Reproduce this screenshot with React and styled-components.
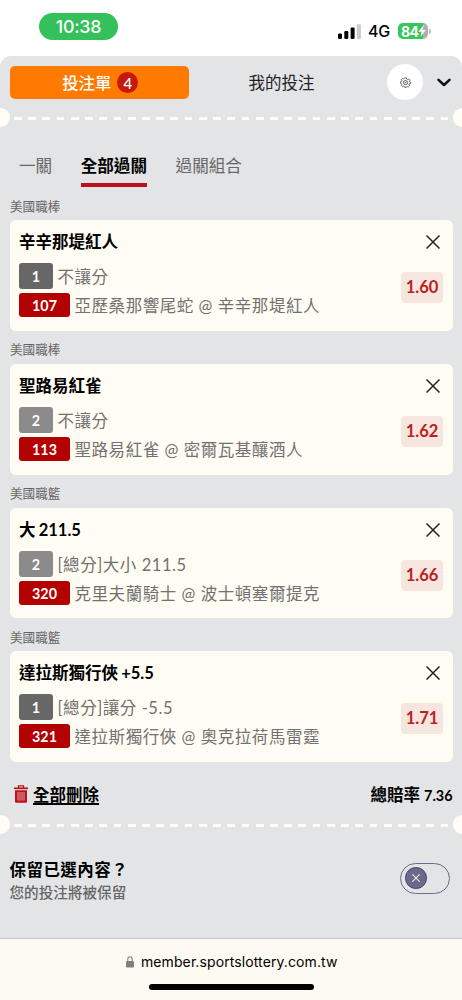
import React, {useState} from "react";
import styled, {createGlobalStyle} from "styled-components";

const GlobalStyle = createGlobalStyle`
  * {
    box-sizing: border-box;
  }

  body {
    margin: 0;
    background: #fff;
    font-family: Lato, "Noto Sans CJK TC", sans-serif;
    color: #000;
  }

  button {
    margin: 0;
    padding: 0;
    border: 0;
    background: none;
    font: inherit;
    color: inherit;
  }

  svg {
    display: block;
    flex: none;
  }
`

const Screen = styled.div`
  display: flex;
  flex-direction: column;
  width: 462px;
  height: 1000px;
  overflow: hidden;
`

// status bar
const StatusBar = styled.header`
  display: flex;
  justify-content: space-between;
  flex: none;
  height: 56px;
  padding: 13px 34px 0 39px;
  font-family: Inter, sans-serif;
`

const Clock = styled.div`
  width: 79px;
  height: 27px;
  border-radius: 14px;
  background: #34c05a;
  color: #fff;
  font-size: 17.8px;
  font-weight: 500;
  line-height: 28px;
  letter-spacing: -0.2px;
  text-align: center;
`

const StatusIcons = styled.div`
  display: flex;
  align-items: center;
  height: 16px;
  margin-top: 10px;
`

const Network = styled.span`
  margin: 0 8px 0 7px;
  font-size: 16px;
  font-weight: 500;
  line-height: 16px;
  letter-spacing: -0.3px;
  width: 22px;
  white-space: nowrap;
`

const Battery = styled.div`
  display: flex;
  align-items: center;
  width: 30px;
  height: 16px;
  padding-left: 3px;
  border-radius: 5px;
  background: linear-gradient(90deg, #34c759 84%, #b0b0b0 84%);
  color: #fff;
  font-size: 14px;
  font-weight: 700;
  letter-spacing: -0.6px;
`

const BatteryCap = styled.i`
  width: 2px;
  height: 5px;
  margin-left: 1px;
  margin-right: -3px;
  border-radius: 0 2px 2px 0;
  background: #bbb;
`

// bet slip
const Slip = styled.main`
  flex: 1;
  min-height: 0;
  overflow: hidden;
  border-radius: 11px 11px 0 0;
  background: #e3e4e6;
`

const SlipHeader = styled.div`
  display: flex;
  align-items: center;
  height: 52px;
  padding: 0 11px 0 9.5px;
`

const SlipButton = styled.button`
  display: flex;
  align-items: center;
  justify-content: center;
  gap: 6px;
  width: 179.5px;
  height: 33px;
  border-radius: 5px;
  background: #ff7a00;
  color: #fff;
  font-size: 16.4px;
  font-weight: 500;
`

const Count = styled.span`
  width: 21px;
  height: 21px;
  margin-right: -2px;
  border-radius: 50%;
  background: #c5190f;
  font-size: 15px;
  line-height: 22px;
  text-align: center;
`

const MyBets = styled.button`
  flex: 1;
  padding-right: 13px;
  color: #222;
  font-size: 16.5px;
  text-align: center;
`

const Settings = styled.button`
  display: flex;
  align-items: center;
  justify-content: center;
  width: 36px;
  height: 36px;
  margin-right: 14px;
  border-radius: 50%;
  background: #fff;
`

const TearLine = styled.div`
  display: flex;
  align-items: center;
  justify-content: space-between;
  height: 19px;
  margin: 0 -9px;
`

const Notch = styled.i`
  width: 18.5px;
  height: 19px;
  border-radius: 50%;
  background: #fffdf3;
`

const Dashes = styled.i`
  width: 434.5px;
  height: 3px;
  margin-top: 2px;
  background: repeating-linear-gradient(90deg, #fffdf3 0 7.8px, transparent 7.8px 14.22px);
`

const Tabs = styled.nav`
  display: flex;
  gap: 28.5px;
  height: 60px;
  padding: 22px 0 0 19px;
`

const Tab = styled.button`
  height: 38px;
  border-bottom: 4px solid ${({$active}) => $active ? '#ba101a' : 'transparent'};
  color: ${({$active}) => $active ? '#000' : '#666'};
  font-size: 16.6px;
  font-weight: ${({$active}) => $active ? 700 : 400};
  line-height: 35px;
`

const League = styled.div`
  height: 33.1px;
  padding: 8.5px 10px 0;
  color: #666;
  font-size: 12.6px;
  line-height: 22px;
`

const Card = styled.section`
  display: flex;
  justify-content: space-between;
  height: 110.7px;
  margin: 0 9.5px;
  padding: 10px 9.5px 0 9.5px;
  border-radius: 6px;
  background: #fffdf3;
`

const CardSide = styled.div`
  display: flex;
  flex-direction: column;
  align-items: flex-end;
`

const Pick = styled.h3`
  height: 24px;
  margin: 0 0 9px;
  font-size: 16.5px;
  font-weight: 700;
  line-height: 24px;
  word-spacing: -0.8px;
`

const Line = styled.div`
  display: flex;
  align-items: center;
  gap: ${({$gap}) => $gap}px;
  height: ${({$height}) => $height}px;
  margin-bottom: 4px;
  color: #717171;
  font-size: 16.5px;
  letter-spacing: 0.55px;
  white-space: nowrap;
`

const Tag = styled.span`
  width: ${({$width}) => $width}px;
  height: 100%;
  border-radius: 3px;
  background: ${({$color}) => $color};
  color: #fff;
  font-size: 14.3px;
  font-weight: 700;
  line-height: ${({$height}) => $height + 1}px;
  letter-spacing: 0;
  text-align: center;
`

const Close = styled.button`
  margin: 5px 3px 23px 0;
`

const Odds = styled.div`
  width: 42px;
  height: 31px;
  border-radius: 4px;
  background: #f7e5df;
  color: #b7241c;
  font-size: 16.5px;
  font-weight: 700;
  line-height: 31px;
  text-align: center;
`

const Summary = styled.div`
  display: flex;
  align-items: center;
  justify-content: space-between;
  height: 53px;
  padding: 10px 9.5px 0 14px;
  font-size: 16.5px;
  font-weight: 700;
`

const ClearAll = styled.button`
  display: flex;
  align-items: center;
  gap: 5px;

  span {
    text-decoration: underline;
    text-decoration-thickness: 1.5px;
    text-underline-offset: 2px;
    text-decoration-skip-ink: none;
  }
`

const Total = styled.span`
  margin-left: 4px;
  font-size: 14.4px;
`

const Keep = styled.div`
  display: flex;
  align-items: center;
  justify-content: space-between;
  padding: 24px 12px 0 9.5px;
`

const KeepTitle = styled.div`
  font-size: 16.5px;
  font-weight: 700;
  line-height: 24px;
  letter-spacing: 0.45px;
`

const KeepText = styled.div`
  color: #666;
  font-size: 14.6px;
  font-weight: 500;
  line-height: 22px;
`

const Switch = styled.button`
  display: flex;
  align-items: center;
  justify-content: ${({$on}) => $on ? 'flex-end' : 'flex-start'};
  width: 50px;
  height: 31px;
  margin-top: -6px;
  padding: 0 4px;
  border: 1px solid #6c698e;
  border-radius: 16px;
`

const Knob = styled.span`
  display: flex;
  align-items: center;
  justify-content: center;
  width: 21.5px;
  height: 21.5px;
  border: 1px solid #45416c;
  border-radius: 50%;
  background: #6b6988;
`

// browser bar
const BrowserBar = styled.footer`
  display: flex;
  flex-direction: column;
  align-items: center;
  flex: none;
  height: 62px;
  border-top: 1px solid #c5c5c7;
  background: #fcfaf1;
`

const Address = styled.div`
  display: flex;
  align-items: center;
  gap: 7px;
  height: 23px;
  margin: 11px 0 11px 1.5px;
  font-family: Inter, sans-serif;
  font-size: 14px;
  letter-spacing: 0.1px;
`

const HomeBar = styled.i`
  width: 165px;
  height: 6px;
  border-radius: 3px;
  background: #000;
`

const SignalIcon = () => (
    <svg width="23" height="15" viewBox="0 0 23 15">
        <rect x="0" y="9.5" width="4" height="5.5" rx="1.2"/>
        <rect x="6.3" y="7" width="4" height="8" rx="1.2"/>
        <rect x="12.6" y="3.5" width="4" height="11.5" rx="1.2"/>
        <rect x="18.9" y="0.3" width="4" height="14.7" rx="1.2" fill="#ccc"/>
    </svg>
)

const BoltIcon = () => (
    <svg width="8" height="12" viewBox="0 0 8 12">
        <path d="M5.6 0 0.3 6.8H3.5L2.4 12 7.7 5H4.6z" fill="#fff"/>
    </svg>
)

const GearIcon = () => (
    <svg width="11" height="11" viewBox="0 0 24 24" fill="none" stroke="#444" strokeWidth="1.7" strokeLinejoin="round">
        <path d="M10 2h4l.7 2.7 2 .8L19 4.2 21.8 7l-1.4 2.4.6 1.5 2 .4v3l-2.5.7-.8 1.8 1.3 2.3-2.8 2.8-2.5-1.3-1.7.7L13.4 23h-3l-.7-2.3-1.9-.8-2.3 1.3-2.8-2.8 1.3-2.4-.7-1.6L1 13.7v-3.4l2.3-.7.7-1.8-1.3-2.2 2.8-2.8L7.8 4l1.6-.6z"/>
        <circle cx="12" cy="12.3" r="4.6"/>
        <circle cx="12" cy="12.3" r="1"/>
    </svg>
)

const ChevronIcon = () => (
    <svg width="14" height="9" viewBox="0 0 14 9" fill="none" stroke="#111" strokeWidth="2.5" strokeLinecap="round"
         strokeLinejoin="round">
        <path d="M1.5 1.8 7 7l5.5-5.2"/>
    </svg>
)

const CrossIcon = ({size, color, width}) => (
    <svg width={size} height={size} viewBox="0 0 14 14" stroke={color} strokeWidth={width}>
        <path d="M0.5 0.5 13.5 13.5M13.5 0.5 0.5 13.5"/>
    </svg>
)

const TrashIcon = () => (
    <svg width="14" height="18" viewBox="0 0 14 18" fill="none" stroke="#bd121b">
        <path d="M4.5 3V0.9H9.5V3" strokeWidth="1.3"/>
        <path d="M0 3.3H14" strokeWidth="1.7"/>
        <path d="M1 5.3H13V16.5Q13 17.8 11.7 17.8H2.3Q1 17.8 1 16.5Z" fill="#bd121b" stroke="none"/>
        <path d="M4 7V15.6M6 7V15.6M8 7V15.6M10 7V15.6" stroke="#e3c5c8" strokeWidth="0.8"/>
    </svg>
)

const LockIcon = () => (
    <svg width="8" height="12" viewBox="0 0 8 12">
        <path d="M1.8 6V3.2a2.2 2.4 0 0 1 4.4 0V6" fill="none" stroke="#808080" strokeWidth="1.1"/>
        <rect x="0" y="5" width="8" height="6.5" rx="1.2" fill="#808080"/>
    </svg>
)

const tabs = ['一關', '全部過關', '過關組合']

const bets = [
    {league: '美國職棒', pick: '辛辛那堤紅人', mark: 1, type: '不讓分', code: '107', game: '亞歷桑那響尾蛇 @ 辛辛那堤紅人', odds: 1.60},
    {league: '美國職棒', pick: '聖路易紅雀', mark: 2, type: '不讓分', code: '113', game: '聖路易紅雀 @ 密爾瓦基釀酒人', odds: 1.62},
    {league: '美國職籃', pick: '大 211.5', mark: 2, type: '[總分]大小 211.5', code: '320', game: '克里夫蘭騎士 @ 波士頓塞爾提克', odds: 1.66},
    {league: '美國職籃', pick: '達拉斯獨行俠 +5.5', mark: 1, type: '[總分]讓分 -5.5', code: '321', game: '達拉斯獨行俠 @ 奧克拉荷馬雷霆', odds: 1.71},
]

const Bet = ({bet}) => (
    <>
        <League>{bet.league}</League>
        <Card>
            <div>
                <Pick>{bet.pick}</Pick>
                <Line $height={26} $gap={4.5}>
                    <Tag $width={34} $height={26} $color={bet.mark === 1 ? '#676767' : '#8b8b8b'}>{bet.mark}</Tag>
                    {bet.type}
                </Line>
                <Line $height={24} $gap={4.5}>
                    <Tag $width={51} $height={24} $color="#b30000">{bet.code}</Tag>
                    {bet.game}
                </Line>
            </div>
            <CardSide>
                <Close><CrossIcon size={14} color="#222" width={1.5}/></Close>
                <Odds>{bet.odds.toFixed(2)}</Odds>
            </CardSide>
        </Card>
    </>
)

const TicketTear = () => (
    <TearLine>
        <Notch/>
        <Dashes/>
        <Notch/>
    </TearLine>
)

export default function App() {
    const [activeTab, setActiveTab] = useState(1)
    const [keep, setKeep] = useState(false)

    return (
        <Screen>
            <GlobalStyle/>
            <StatusBar>
                <Clock>10:38</Clock>
                <StatusIcons>
                    <SignalIcon/>
                    <Network>4G</Network>
                    <Battery>84<BoltIcon/></Battery>
                    <BatteryCap/>
                </StatusIcons>
            </StatusBar>
            <Slip>
                <SlipHeader>
                    <SlipButton>投注單<Count>{bets.length}</Count></SlipButton>
                    <MyBets>我的投注</MyBets>
                    <Settings><GearIcon/></Settings>
                    <ChevronIcon/>
                </SlipHeader>
                <TicketTear/>
                <Tabs>
                    {tabs.map((tab, i) => (
                        <Tab key={tab} $active={i === activeTab} onClick={() => setActiveTab(i)}>{tab}</Tab>
                    ))}
                </Tabs>
                {bets.map(bet => <Bet key={bet.code} bet={bet}/>)}
                <Summary>
                    <ClearAll><TrashIcon/><span>全部刪除</span></ClearAll>
                    <div>總賠率<Total>7.36</Total></div>
                </Summary>
                <TicketTear/>
                <Keep>
                    <div>
                        <KeepTitle>保留已選內容？</KeepTitle>
                        <KeepText>您的投注將被保留</KeepText>
                    </div>
                    <Switch $on={keep} onClick={() => setKeep(p => !p)}>
                        <Knob><CrossIcon size={8} color="#e6e6ee" width={2}/></Knob>
                    </Switch>
                </Keep>
            </Slip>
            <BrowserBar>
                <Address><LockIcon/>member.sportslottery.com.tw</Address>
                <HomeBar/>
            </BrowserBar>
        </Screen>
    )
}
